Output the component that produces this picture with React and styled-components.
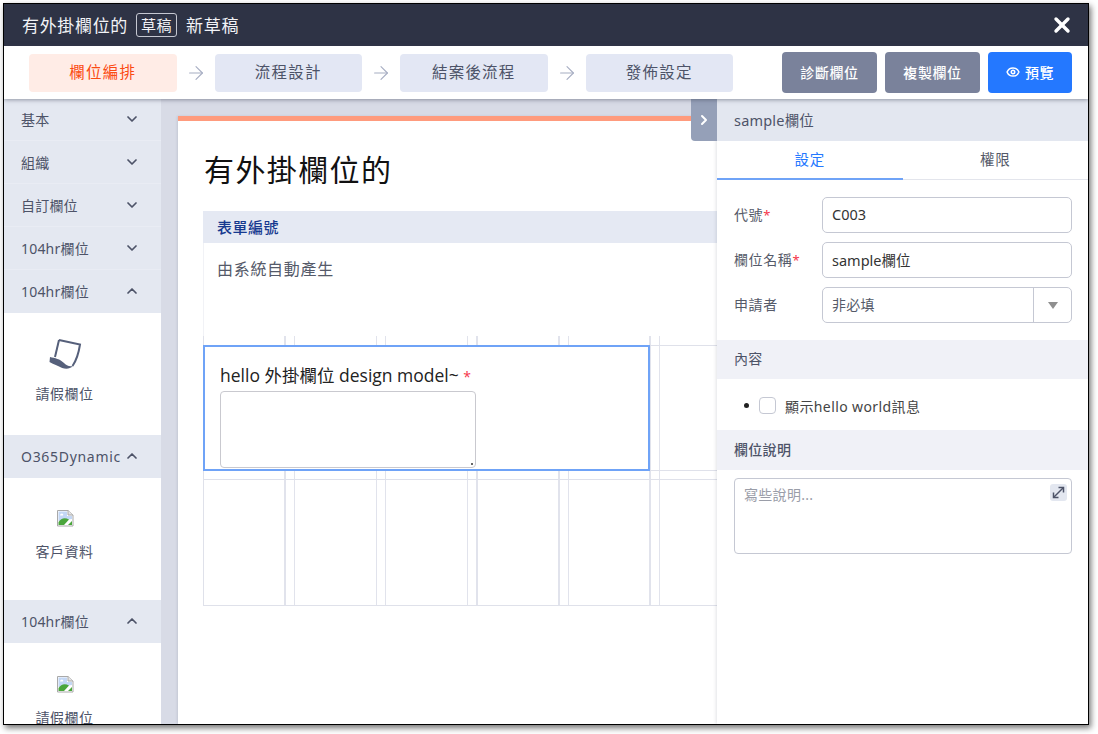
import styled, { createGlobalStyle } from "styled-components";
import { ArrowRight, ChevronDown, ChevronRight, ChevronUp, Eye, X } from "lucide-react";

const GlobalStyle = createGlobalStyle`
  html, body {
    margin: 0;
    height: 100%;
    background: #fff;
    overflow: hidden;
  }
  * { box-sizing: border-box; }
  body, input, textarea, button {
    font-family: "Noto Sans", "Noto Sans CJK TC", sans-serif;
  }
`;

const Page = styled.div`
  padding: 3px;
  height: 734px;
`;

const Window = styled.div`
  width: 1086px;
  height: 722px;
  border: 1px solid #000;
  box-shadow: 2px 3px 6px rgba(0, 0, 0, 0.55);
  display: flex;
  flex-direction: column;
  overflow: hidden;
  background: #fff;
`;

const TitleBar = styled.div`
  height: 42px;
  flex: none;
  background: #2e3345;
  color: #f2f3f7;
  display: flex;
  align-items: center;
  padding: 0 14px 2px 18px;
  font-size: 17px;
  letter-spacing: 0.67px;
`;

const Badge = styled.span`
  border: 1px solid #c5c8d2;
  border-radius: 3px;
  font-size: 15px;
  letter-spacing: 0.5px;
  line-height: 22px;
  padding: 0 4px;
  margin: 2px 9px 0 8px;
`;

const CloseButton = styled.span`
  margin: 2px 0 0 auto;
  display: flex;
  color: #fff;
`;

const Toolbar = styled.div`
  height: 53px;
  flex: none;
  background: #fff;
  display: flex;
  align-items: center;
  padding: 0 16px 0 25px;
  box-shadow: 0 1px 4px rgba(60, 65, 85, 0.5);
  position: relative;
  z-index: 3;
`;

const Step = styled.div`
  width: 147.5px;
  height: 38px;
  border-radius: 4px;
  display: flex;
  align-items: center;
  justify-content: center;
  padding-bottom: 2px;
  font-size: 15.5px;
  letter-spacing: 1.2px;
  background: ${(props) => (props.$active ? "#ffece6" : "#e3e7f4")};
  color: ${(props) => (props.$active ? "#fb4a12" : "#4d5368")};
`;

const StepArrow = styled.span`
  width: 38px;
  display: flex;
  justify-content: center;
  color: #a6adc2;
`;

const ActionGroup = styled.div`
  margin-left: auto;
  display: flex;
  gap: 8px;
`;

const ActionButton = styled.button`
  height: 41px;
  width: ${(props) => (props.$primary ? "84px" : "95px")};
  border: none;
  border-radius: 4px;
  display: flex;
  align-items: center;
  justify-content: center;
  gap: 5px;
  padding: 0 0 2px;
  color: #fff;
  font-size: 14px;
  font-weight: 500;
  letter-spacing: 0.6px;
  background: ${(props) => (props.$primary ? "#2478ff" : "#7a829b")};
`;

const Body = styled.div`
  flex: 1;
  min-height: 0;
  display: flex;
`;

const Sidebar = styled.div`
  width: 157px;
  flex: none;
  overflow: hidden;
  background: #fff;
`;

const GroupHeader = styled.div`
  height: 43px;
  background: #e4e8f1;
  border-bottom: 1px solid ${(props) => (props.$open ? "#e4e8f1" : "#e9ecf4")};
  display: flex;
  align-items: center;
  justify-content: space-between;
  padding: 0 21px 0 17px;
  color: #4d5368;
  font-size: 14px;
  letter-spacing: ${(props) => (props.$wide ? "0.7px" : "0.2px")};

  &:first-child {
    height: 42px;
    padding-bottom: 1px;
  }
`;

const GroupBody = styled.div`
  height: ${(props) => props.$height}px;
  padding-top: ${(props) => props.$top}px;
  display: flex;
  flex-direction: column;
  align-items: center;
  padding-right: 36px;
  color: #4d5368;
  font-size: 14px;
  letter-spacing: 0.5px;
`;

const ItemIcon = styled.div`
  height: ${(props) => props.$height}px;
  display: flex;
  justify-content: center;
  margin-bottom: ${(props) => props.$gap}px;
`;

const Canvas = styled.div`
  flex: 1;
  min-width: 0;
  background: #d8dbe6;
  padding: 17px 0 0 17px;
  display: flex;
  overflow: hidden;
`;

const Sheet = styled.div`
  flex: 1;
  min-width: 0;
  background: #fff;
  border-top: 5px solid #ff9b7d;
  padding: 0 0 0 25px;
  box-shadow: -1px 0 2px rgba(60, 65, 85, 0.12);
`;

const SheetTitle = styled.h1`
  margin: 0;
  height: 90px;
  display: flex;
  align-items: center;
  font-size: 30px;
  font-weight: 400;
  letter-spacing: 1.4px;
  color: #111;
  padding: 4px 0 0 1px;
`;

const SectionHead = styled.div`
  height: 32px;
  background: #e5e9f3;
  color: #16398f;
  font-size: 15px;
  font-weight: 500;
  letter-spacing: 0.5px;
  display: flex;
  align-items: center;
  padding: 0 0 2px 14px;
`;

const AutoNumber = styled.div`
  height: 93px;
  border-left: 1px solid #f1f2f6;
  padding: 14px 0 0 13px;
  font-size: 16px;
  letter-spacing: 0.7px;
  line-height: 24px;
  color: #555a69;
`;

const Grid = styled.div`
  height: 270px;
  display: flex;
  flex-direction: column;
  border-left: 1px solid #dfe1ea;
  border-bottom: 1px solid #dfe1ea;
  background-image:
    repeating-linear-gradient(to right, transparent 0, transparent 80.5px, #e1e3ec 80.5px, #e1e3ec 82px, transparent 82px, transparent 90px, #e1e3ec 90px, #e1e3ec 91.25px);
`;

const GridGap = styled.div`
  height: ${(props) => props.$height}px;
  flex: none;
  border-bottom: 1px solid #dfe1ea;
`;

const FieldRow = styled.div`
  height: 125px;
  flex: none;
  border-bottom: 1px solid #dfe1ea;
`;

const SelectedField = styled.div`
  width: 447px;
  height: 126px;
  margin-left: -1px;
  margin-top: -1px;
  background: #fff;
  border: 2px solid #6fa3f7;
  padding: 14px 0 0 15px;
`;

const FieldLabel = styled.div`
  font-family: "Open Sans", "Noto Sans CJK TC", sans-serif;
  font-size: 17.5px;
  line-height: 29px;
  color: #222;
`;

const Required = styled.span`
  color: #f5344a;
  font-size: ${(props) => props.$size || 14}px;
`;

const FieldArea = styled.textarea`
  display: block;
  width: 256px;
  height: 77px;
  margin: 0;
  border: 1px solid #c9c9cf;
  border-radius: 4px;
  resize: none;
  background: #fff linear-gradient(#666, #666) no-repeat right 2px bottom 2px / 2px 2px;
  outline: none;
`;

const Panel = styled.div`
  width: 371px;
  flex: none;
  position: relative;
  background: #fff;
  box-shadow: -1px 0 3px rgba(60, 65, 85, 0.15);
  display: flex;
  flex-direction: column;
  z-index: 2;
`;

const PanelToggle = styled.div`
  position: absolute;
  left: -26px;
  top: 0;
  width: 26px;
  height: 42px;
  background: #95a0b8;
  border-bottom-left-radius: 4px;
  color: #fff;
  display: flex;
  align-items: center;
  justify-content: center;
`;

const PanelHead = styled.div`
  height: 42px;
  flex: none;
  background: #e3e7f0;
  display: flex;
  align-items: center;
  padding: 0 0 2px 17px;
  font-size: 14.5px;
  letter-spacing: 0.2px;
  color: #4d5368;
`;

const Tabs = styled.div`
  height: 39px;
  flex: none;
  display: flex;
  border-bottom: 1px solid #e3e5ec;
`;

const Tab = styled.div`
  width: 186px;
  height: 39px;
  display: flex;
  align-items: center;
  justify-content: center;
  padding-bottom: 2px;
  font-size: 14.5px;
  letter-spacing: 0.7px;
  color: ${(props) => (props.$active ? "#2478ff" : "#555a69")};
  border-bottom: 2px solid ${(props) => (props.$active ? "#6fa3f7" : "transparent")};
`;

const PanelForm = styled.div`
  padding: 17px 16px 17px 17px;
  display: flex;
  flex-direction: column;
  gap: 9px;
`;

const FormRow = styled.label`
  display: flex;
  align-items: center;
  height: 36px;
  color: #555a69;
  font-size: 14px;
  letter-spacing: 0.6px;
`;

const RowLabel = styled.span`
  width: 88px;
  flex: none;
  padding-bottom: 3px;
`;

const TextInput = styled.input`
  flex: 1;
  min-width: 0;
  height: 36px;
  border: 1px solid #c5c8d3;
  border-radius: 5px;
  padding: 0 9px 2px;
  font-size: 14.5px;
  color: #333;
  outline: none;
`;

const SelectBox = styled.div`
  flex: 1;
  height: 36px;
  border: 1px solid #c5c8d3;
  border-radius: 5px;
  display: flex;
  align-items: center;
  padding-left: 9px;
  font-size: 14px;
  letter-spacing: 0.3px;
  color: #555a69;
`;

const SelectValue = styled.span`
  padding-bottom: 3px;
`;

const SelectCaret = styled.span`
  margin-left: auto;
  width: 38px;
  height: 100%;
  border-left: 1px solid #c5c8d3;
  display: flex;
  align-items: center;
  justify-content: center;

  &::after {
    content: "";
    border-left: 5.5px solid transparent;
    border-right: 5.5px solid transparent;
    border-top: 7px solid #8f8f8f;
  }
`;

const PanelSection = styled.div`
  height: ${(props) => props.$height}px;
  flex: none;
  background: #f0f1f7;
  display: flex;
  align-items: center;
  padding: 0 0 3px 17px;
  color: #4d5368;
  font-size: 14px;
  letter-spacing: 0.3px;
  font-weight: ${(props) => props.$weight || 400};
`;

const OptionList = styled.ul`
  margin: 0;
  height: 51px;
  padding: 2px 0 0 27px;
  list-style: none;
  display: flex;
  align-items: center;
  font-size: 14px;
  letter-spacing: 0.4px;
  color: #444;
`;

const OptionItem = styled.li`
  display: flex;
  align-items: center;

  &::before {
    content: "";
    width: 5px;
    height: 5px;
    border-radius: 50%;
    background: #222;
    margin-right: 10px;
  }
`;

const OptionLabel = styled.label`
  display: flex;
  align-items: center;
  gap: 9px;
`;

const CheckBox = styled.span`
  width: 17px;
  height: 17px;
  border: 1px solid #c5c8d3;
  border-radius: 4px;
  background: #fff;
`;

const DescWrap = styled.div`
  position: relative;
  margin: 8px 16px 0 17px;
  height: 76px;
`;

const DescArea = styled.textarea`
  display: block;
  width: 100%;
  height: 100%;
  resize: none;
  border: 1px solid #c5c8d3;
  border-radius: 4px;
  padding: 5px 9px;
  font-size: 14px;
  letter-spacing: 0.3px;
  outline: none;

  &::placeholder {
    color: #9a9da8;
  }
`;

const ExpandButton = styled.span`
  position: absolute;
  top: 6px;
  right: 5px;
  width: 17px;
  height: 17px;
  border-radius: 3px;
  background: #e3e7f0;
  color: #4d5368;
  display: flex;
  align-items: center;
  justify-content: center;
`;

const LeaveIcon = () => (
  <svg width="36" height="34" viewBox="0 0 36 34" fill="none">
    <path d="M12 3 L33 7.5 C32 14 29 24 25.5 29" stroke="#56607b" strokeWidth="2" />
    <path d="M12 3 L8 20" stroke="#56607b" strokeWidth="2" />
    <path d="M3 20 C8 21 13 22 17 26 C19 28 22 30 26 29 C22 33 16 32 11 29 C7 27 4 26 2.5 25 Z" fill="#56607b" />
  </svg>
);

const BrokenImage = () => (
  <svg width="18" height="18" viewBox="0 0 18 18">
    <path d="M1.5 1.5 H12 L17 6 V17 H1.5 Z" fill="#fff" stroke="#a9a9a9" strokeWidth="1" />
    <path d="M12 1.5 V6 H17" fill="#e4e4e4" stroke="#a9a9a9" strokeWidth="1" />
    <path d="M2.5 2.5 H11 V7 H16 V10 L2.5 12 Z" fill="#c3d7f5" />
    <path d="M4.5 5 C6 3.5 8 5 7 6.5 H4 Z" fill="#fff" />
    <path d="M2.5 16 V13 C5 9 9 8 13 10.5 L8 16 Z" fill="#4aa63c" />
    <path d="M12 16 L16 12 V16 Z" fill="#4aa63c" />
  </svg>
);

const groups = ["基本", "組織", "自訂欄位", "104hr欄位"];

const Group = ({ title }) => (
  <GroupHeader>
    {title}
    <ChevronDown size={16} strokeWidth={2.6} />
  </GroupHeader>
);

const OpenGroup = ({ title, wide }) => (
  <GroupHeader $open $wide={wide}>
    {title}
    <ChevronUp size={16} strokeWidth={2.6} />
  </GroupHeader>
);

const App = () => {
  return (
    <Page>
      <GlobalStyle />
      <Window>
        <TitleBar>
          有外掛欄位的
          <Badge>草稿</Badge>
          新草稿
          <CloseButton>
            <X size={24} strokeWidth={3.4} />
          </CloseButton>
        </TitleBar>
        <Toolbar>
          <Step $active>欄位編排</Step>
          <StepArrow><ArrowRight size={22} strokeWidth={1.2} /></StepArrow>
          <Step>流程設計</Step>
          <StepArrow><ArrowRight size={22} strokeWidth={1.2} /></StepArrow>
          <Step>結案後流程</Step>
          <StepArrow><ArrowRight size={22} strokeWidth={1.2} /></StepArrow>
          <Step>發佈設定</Step>
          <ActionGroup>
            <ActionButton>診斷欄位</ActionButton>
            <ActionButton>複製欄位</ActionButton>
            <ActionButton $primary>
              <Eye size={14} strokeWidth={2.6} />
              預覽
            </ActionButton>
          </ActionGroup>
        </Toolbar>
        <Body>
          <Sidebar>
            {groups.map((title) => (
              <Group key={title} title={title} />
            ))}
            <OpenGroup title="104hr欄位" />
            <GroupBody $height={122} $top={24}>
              <ItemIcon $height={38} $gap={8}><LeaveIcon /></ItemIcon>
              請假欄位
            </GroupBody>
            <OpenGroup title="O365Dynamic" wide />
            <GroupBody $height={122} $top={31}>
              <ItemIcon $height={18} $gap={14}><BrokenImage /></ItemIcon>
              客戶資料
            </GroupBody>
            <OpenGroup title="104hr欄位" />
            <GroupBody $height={122} $top={32}>
              <ItemIcon $height={18} $gap={14}><BrokenImage /></ItemIcon>
              請假欄位
            </GroupBody>
          </Sidebar>
          <Canvas>
            <Sheet>
              <SheetTitle>有外掛欄位的</SheetTitle>
              <SectionHead>表單編號</SectionHead>
              <AutoNumber>由系統自動產生</AutoNumber>
              <Grid>
                <GridGap $height={10} />
                <FieldRow>
                  <SelectedField>
                    <FieldLabel>
                      hello 外掛欄位 design model~ <Required>*</Required>
                    </FieldLabel>
                    <FieldArea />
                  </SelectedField>
                </FieldRow>
                <GridGap $height={9} />
              </Grid>
            </Sheet>
          </Canvas>
          <Panel>
            <PanelToggle><ChevronRight size={16} strokeWidth={3} /></PanelToggle>
            <PanelHead>sample欄位</PanelHead>
            <Tabs>
              <Tab $active>設定</Tab>
              <Tab>權限</Tab>
            </Tabs>
            <PanelForm>
              <FormRow>
                <RowLabel>代號<Required $size={13}>*</Required></RowLabel>
                <TextInput defaultValue="C003" />
              </FormRow>
              <FormRow>
                <RowLabel>欄位名稱<Required $size={13}>*</Required></RowLabel>
                <TextInput defaultValue="sample欄位" />
              </FormRow>
              <FormRow>
                <RowLabel>申請者</RowLabel>
                <SelectBox>
                  <SelectValue>非必填</SelectValue>
                  <SelectCaret />
                </SelectBox>
              </FormRow>
            </PanelForm>
            <PanelSection $height={39}>內容</PanelSection>
            <OptionList>
              <OptionItem>
                <OptionLabel>
                  <CheckBox />
                  顯示hello world訊息
                </OptionLabel>
              </OptionItem>
            </OptionList>
            <PanelSection $height={40} $weight={500}>欄位說明</PanelSection>
            <DescWrap>
              <DescArea placeholder="寫些說明..." />
              <ExpandButton>
                <svg width="13" height="13" viewBox="0 0 13 13" fill="none" stroke="currentColor" strokeWidth="1.5">
                  <path d="M2 11 L11 2" />
                  <path d="M6.5 1.5 H11.5 V6.5" />
                  <path d="M1.5 6.5 V11.5 H6.5" />
                </svg>
              </ExpandButton>
            </DescWrap>
          </Panel>
        </Body>
      </Window>
    </Page>
  );
};

export default App;
